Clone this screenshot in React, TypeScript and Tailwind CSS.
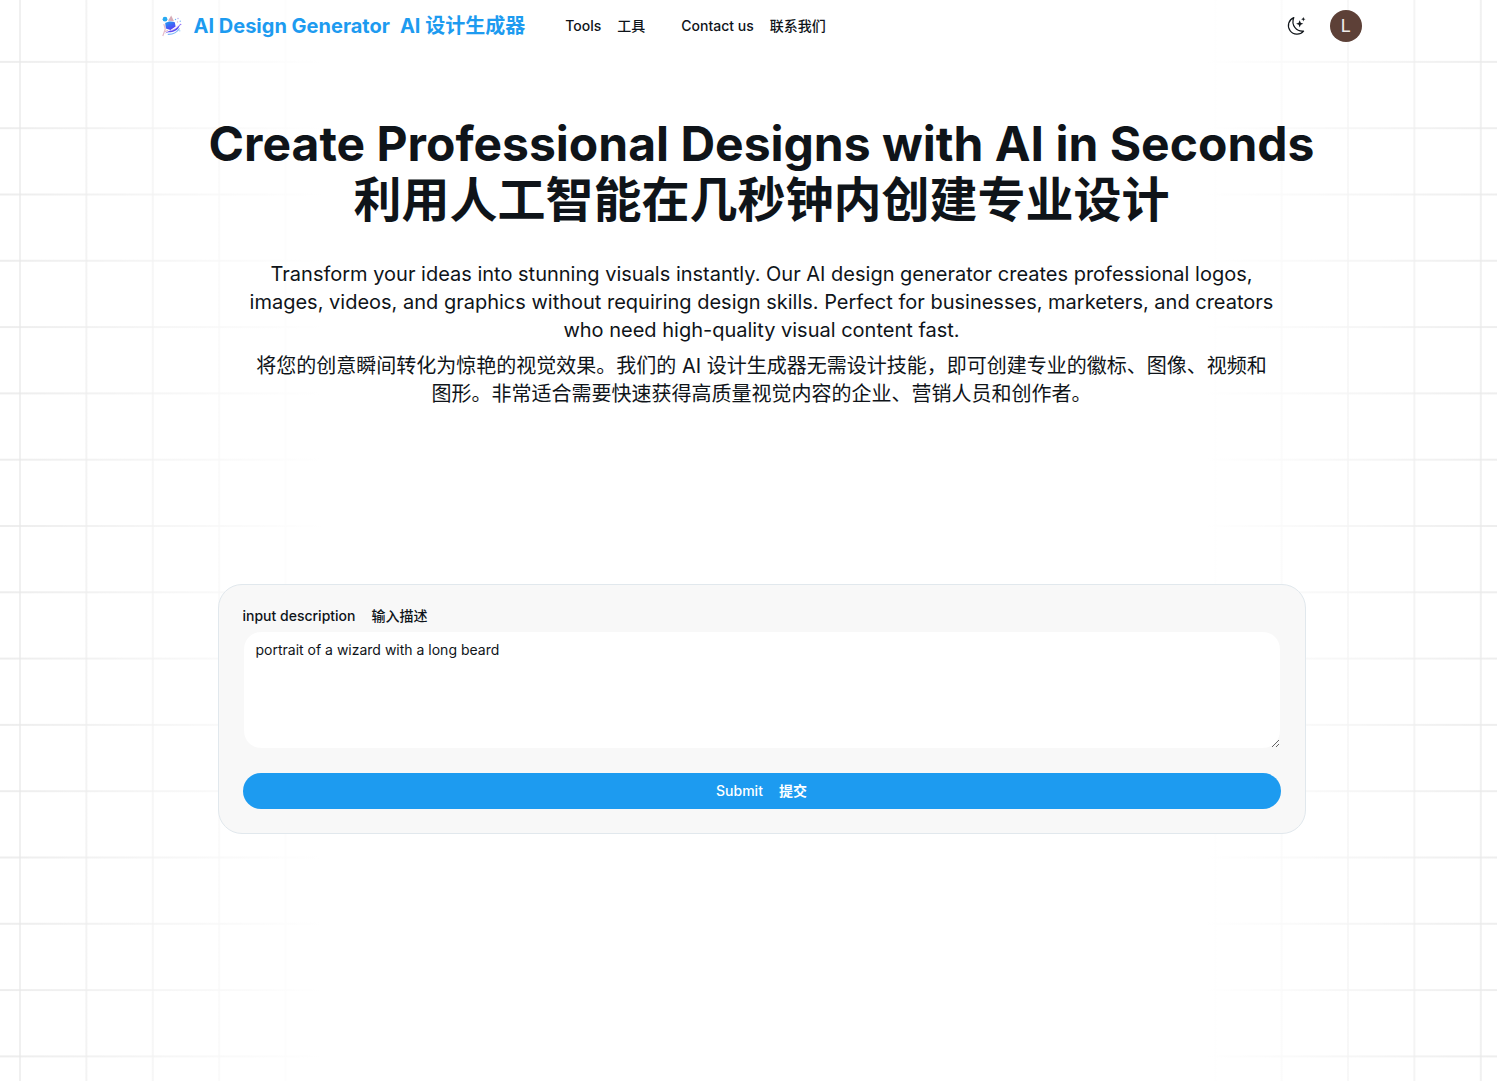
import { useState } from "react"

const PITCH_X = 66.4
const PITCH_Y = 66.3

function GridBackground() {
  return (
    <svg className="absolute inset-0 -z-10 h-full w-full" aria-hidden="true">
      <defs>
        <pattern id="grid" x="19" y="-5.4" width={PITCH_X} height={PITCH_Y} patternUnits="userSpaceOnUse">
          <path d={`M1 0V${PITCH_Y}M0 1H${PITCH_X}`} stroke="#e7e7e7" strokeWidth="1.3" fill="none" />
        </pattern>
        <linearGradient id="fade" x1="0" x2="1" y1="0" y2="0">
          <stop offset="0" stopColor="#fff" stopOpacity="0" />
          <stop offset="0.215" stopColor="#fff" />
          <stop offset="0.805" stopColor="#fff" />
          <stop offset="1" stopColor="#fff" stopOpacity="0.05" />
        </linearGradient>
      </defs>
      <rect width="100%" height="100%" fill="url(#grid)" />
      <rect width="100%" height="100%" fill="url(#fade)" />
    </svg>
  )
}

function Logo() {
  return (
    <svg className="h-6 w-6" viewBox="0 0 24 24" aria-hidden="true">
      <defs>
        <linearGradient id="planet" x1="0" y1="0" x2="0.6" y2="1">
          <stop offset="0" stopColor="#1fa8f0" />
          <stop offset="0.5" stopColor="#3a6cf5" />
          <stop offset="1" stopColor="#5a3df5" />
        </linearGradient>
      </defs>
      <circle cx="3" cy="5.2" r="2.4" fill="#27aaf2" />
      <path d="M9.200 1.500L12 7.200 6 6.800z" fill="#d6acb8" />
      <path d="M3.200 9C5.500 7.200 10 6.800 12.800 8.300L13.600 12.500 8.500 16 3.800 14.500z" fill="url(#planet)" />
      <path d="M1.800 10l1.500 5-2.500 7M3 17.800l3-1.500" stroke="#e5bccb" strokeWidth="1.200" fill="none" />
      <path d="M3 19.500C7 15.500 14 17 18 10 17.500 15 13 18 8.500 18.300 6 18.400 4.500 18.600 3 19.500z" fill="#5c4cf3" />
      <path d="M5.800 20.300C10.500 20.500 15 18.300 17.500 14.500" stroke="#7bb7f6" strokeWidth="1.300" fill="none" />
      <path d="M9 16.500C12 15.800 14.500 14 16 11.500" stroke="#e0bfe6" strokeWidth="0.800" fill="none" />
      <circle cx="13.500" cy="5.500" r=".7" fill="#6fb5f7" />
      <circle cx="16" cy="4.500" r=".7" fill="#a9a5f5" />
      <circle cx="15.500" cy="8" r=".7" fill="#e2b3cb" />
      <circle cx="18.200" cy="7.200" r=".6" fill="#4f9ff5" />
      <circle cx="18.700" cy="10.500" r=".7" fill="#8f6cf5" />
      <circle cx="17.800" cy="16.800" r=".6" fill="#7cbdf7" />
    </svg>
  )
}

function MoonIcon() {
  return (
    <svg className="h-5 w-5" viewBox="0 0 20 20" fill="none" aria-hidden="true">
      <path
        d="M7.800 1.600A8.600 8.600 0 1 0 17.600 15.100C11 16 4.600 9.500 7.800 1.600z"
        stroke="#0f1419"
        strokeWidth="1.200"
        strokeLinejoin="round"
      />
      <path d="M13.700 4.200l1 2.600 2.600 1-2.600 1-1 2.600-1-2.600-2.600-1 2.600-1z" fill="#0f1419" />
      <path d="M17.300 1l.6 1.600 1.600.6-1.600.6-.6 1.600-.6-1.600-1.600-.6 1.600-.6z" fill="#0f1419" />
    </svg>
  )
}

const links = [
  { label: "Tools", translation: "工具" },
  { label: "Contact us", translation: "联系我们" },
]

export default function App() {
  const [description, setDescription] = useState("portrait of a wizard with a long beard")

  return (
    <div className="relative isolate min-h-screen bg-white pl-[26px] font-['Inter','Noto_Sans_CJK_SC',sans-serif] text-[#0f1419]">
      <GridBackground />

      <header className="mx-auto flex h-[52px] max-w-[1200px] items-center">
        <a href="#" className="flex items-center gap-2 text-xl font-bold text-[#1d9bf0]">
          <Logo />
          <span className="flex gap-[10px]">
            <span>AI Design Generator</span>
            <span>AI 设计生成器</span>
          </span>
        </a>
        <nav className="ml-10 flex gap-9 text-sm font-medium">
          {links.map((link) => (
            <a key={link.label} href="#" className="flex gap-4">
              <span>{link.label}</span>
              <span>{link.translation}</span>
            </a>
          ))}
        </nav>
        <div className="ml-auto flex items-center gap-6">
          <button type="button" aria-label="Toggle theme">
            <MoonIcon />
          </button>
          <button
            type="button"
            className="h-8 w-8 rounded-full bg-[#5d4037] font-[Roboto] text-lg leading-8 text-[#efebe9]"
          >
            L
          </button>
        </div>
      </header>

      <main className="mx-auto max-w-[1136px] px-6">
        <section className="pt-16 text-center">
          <h1 className="-mx-6 text-5xl font-bold">
            <span className="block leading-[56px]">Create Professional Designs with AI in Seconds</span>
            <span className="block leading-[56px]">利用人工智能在几秒钟内创建专业设计</span>
          </h1>
          <div className="mx-auto mt-8 max-w-[1024px] text-xl leading-7">
            <p>
              Transform your ideas into stunning visuals instantly. Our AI design generator creates professional logos,
              images, videos, and graphics without requiring design skills. Perfect for businesses, marketers, and
              creators who need high-quality visual content fast.
            </p>
            <p className="mt-2">
              将您的创意瞬间转化为惊艳的视觉效果。我们的 AI 设计生成器无需设计技能，即可创建专业的徽标、图像、视频和图形。非常适合需要快速获得高质量视觉内容的企业、营销人员和创作者。
            </p>
          </div>
        </section>

        <form
          className="mt-44 rounded-3xl border border-[#e1e8ed] bg-[#f8f8f8] p-6"
          onSubmit={(e) => e.preventDefault()}
        >
          <label htmlFor="description" className="flex gap-4 text-sm leading-[14px] font-medium">
            <span>input description</span>
            <span>输入描述</span>
          </label>
          <textarea
            id="description"
            className="mt-2 block h-[118px] w-full rounded-[18px] border border-[#f8f8f8] bg-white px-3 py-2 text-sm outline-none"
            value={description}
            onChange={(e) => setDescription(e.target.value)}
          />
          <button
            type="submit"
            className="mt-6 flex h-9 w-full items-center justify-center gap-4 rounded-full bg-[#1d9bf0] text-sm font-medium text-white"
          >
            <span>Submit</span>
            <span className="font-bold">提交</span>
          </button>
        </form>
      </main>
    </div>
  )
}
